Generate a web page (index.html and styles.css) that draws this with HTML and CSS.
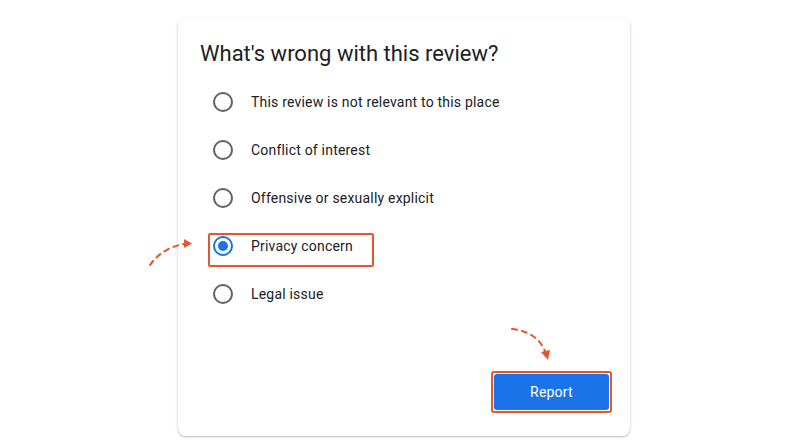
FILE: index.html
```html
<!DOCTYPE html>
<html>
<head>
<meta charset="utf-8">
<link rel="stylesheet" href="styles.css">
</head>
<body>
<div class="stage">
  <div class="card">
    <h1 class="title">What's wrong with this review?</h1>
    <ul class="options">
      <li class="option"><span class="radio"></span><span class="label">This review is not relevant to this place</span></li>
      <li class="option"><span class="radio"></span><span class="label">Conflict of interest</span></li>
      <li class="option"><span class="radio"></span><span class="label">Offensive or sexually explicit</span></li>
      <li class="option selected"><span class="radio checked"></span><span class="label">Privacy concern</span><span class="mark mark-option"></span></li>
      <li class="option"><span class="radio"></span><span class="label">Legal issue</span></li>
    </ul>
    <div class="actions">
      <button class="report">Report<span class="mark mark-button"></span></button>
    </div>
  </div>
  <svg class="arrows" width="800" height="446" viewBox="0 0 800 446">
    <path d="M150 265 Q162 248 184 244" fill="none" stroke="#e4572e" stroke-width="2" stroke-dasharray="5 5" stroke-linecap="round"/>
    <path d="M184 239 L192 243.5 L184 248 Z" fill="#e4572e"/>
    <path d="M512 329 Q537 332 545 351" fill="none" stroke="#e4572e" stroke-width="2" stroke-dasharray="5 5" stroke-linecap="round"/>
    <path d="M541 352 L548 360 L550 350 Z" fill="#e4572e"/>
  </svg>
</div>
</body>
</html>
```
FILE: styles.css
```css
* { box-sizing: border-box; }
html, body { margin: 0; padding: 0; background: #fff; }
body { font-family: Roboto, "Noto Sans", Arial, sans-serif; color: #202124; }
.stage { position: relative; width: 800px; height: 446px; padding: 18px 0 0 178px; }
.card {
  width: 452px; height: 418px;
  background: #fff;
  border-radius: 8px;
  box-shadow: 0 1px 3px rgba(60,64,67,0.28), 0 1px 1px rgba(60,64,67,0.10);
  padding: 22px 0 0 22px;
  display: flex; flex-direction: column;
}
.title { margin: 0; font-size: 22px; line-height: 28px; font-weight: 400; color: #202124; letter-spacing: 0; }
.options { list-style: none; margin: 10px 0 0 0; padding: 0; }
.option { position: relative; height: 48px; display: flex; align-items: center; padding-left: 13px; }
.radio { width: 20px; height: 20px; border: 2px solid #5f6368; border-radius: 50%; flex: none; position: relative; }
.radio.checked { border-color: #1a73e8; }
.radio.checked::after { content: ""; position: absolute; left: 3px; top: 3px; width: 10px; height: 10px; border-radius: 50%; background: #1a73e8; }
.label { margin-left: 18px; font-size: 14px; letter-spacing: 0.2px; color: #202124; }
.mark { position: absolute; border: 2px solid #e4572e; border-radius: 2px; pointer-events: none; }
.mark-option { left: 8px; top: 11px; width: 166px; height: 34px; }
.actions { margin-top: auto; display: flex; justify-content: flex-end; padding: 0 21px 26px 0; }
.report {
  position: relative;
  width: 115px; height: 36px;
  background: #1a73e8; color: #fff;
  border: none; border-radius: 3px;
  font-family: Roboto, Arial, sans-serif; font-size: 14px; font-weight: 400; letter-spacing: 0.2px;
}
.mark-button { left: -3px; top: -3px; width: 121px; height: 42px; border-radius: 3px; }
.arrows { position: absolute; left: 0; top: 0; pointer-events: none; }
```
